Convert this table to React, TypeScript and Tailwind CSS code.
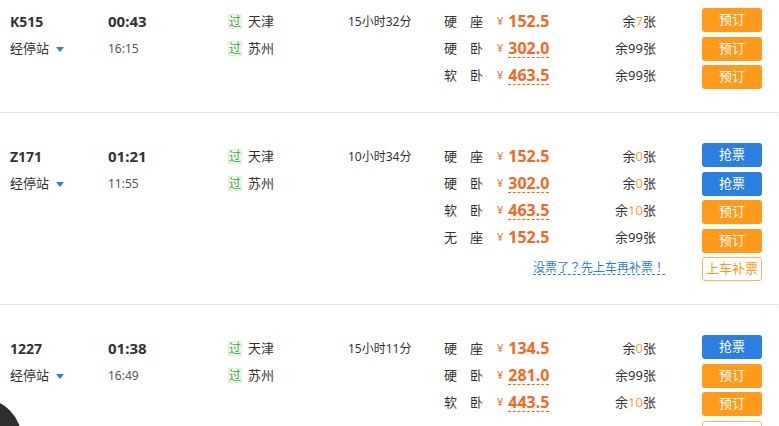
import React from 'react';

type Seat = {
  type: [string, string];
  price: string;
  left: string;
  hot?: boolean;
  dashed?: boolean;
  btn: '预订' | '抢票';
};

type Train = {
  no: string;
  dep: string;
  arr: string;
  from: string;
  to: string;
  dur: string;
  seats: Seat[];
  extra?: boolean;
};

const trains: Train[] = [
  {
    no: 'K515',
    dep: '00:43',
    arr: '16:15',
    from: '天津',
    to: '苏州',
    dur: '15小时32分',
    seats: [
      { type: ['硬', '座'], price: '152.5', left: '7', hot: true, btn: '预订' },
      { type: ['硬', '卧'], price: '302.0', left: '99', dashed: true, btn: '预订' },
      { type: ['软', '卧'], price: '463.5', left: '99', dashed: true, btn: '预订' },
    ],
  },
  {
    no: 'Z171',
    dep: '01:21',
    arr: '11:55',
    from: '天津',
    to: '苏州',
    dur: '10小时34分',
    seats: [
      { type: ['硬', '座'], price: '152.5', left: '0', hot: true, btn: '抢票' },
      { type: ['硬', '卧'], price: '302.0', left: '0', hot: true, dashed: true, btn: '抢票' },
      { type: ['软', '卧'], price: '463.5', left: '10', hot: true, dashed: true, btn: '预订' },
      { type: ['无', '座'], price: '152.5', left: '99', btn: '预订' },
    ],
    extra: true,
  },
  {
    no: '1227',
    dep: '01:38',
    arr: '16:49',
    from: '天津',
    to: '苏州',
    dur: '15小时11分',
    seats: [
      { type: ['硬', '座'], price: '134.5', left: '0', hot: true, btn: '抢票' },
      { type: ['硬', '卧'], price: '281.0', left: '99', dashed: true, btn: '预订' },
      { type: ['软', '卧'], price: '443.5', left: '10', hot: true, dashed: true, btn: '预订' },
    ],
    extra: true,
  },
];

const PassBadge = () => (
  <span className="inline-flex items-center justify-center w-[14px] h-[15px] bg-[#f3f9ec] border border-[#e0eed6] text-[#3aa34a] text-[12px] leading-none mr-[6px]">
    过
  </span>
);

const TrainRow = ({ t }: { t: Train }) => (
  <div className="flex pt-[30px] pb-[23px] border-b border-[#e3e3e3] text-[#333]">
    {/* train number */}
    <div className="w-[98px] ml-[10px]">
      <div className="h-[27px] flex items-center text-[14px] font-bold">{t.no}</div>
      <div className="h-[27px] flex items-center text-[13px]">
        经停站
        <span className="ml-[7px] mt-[2px] w-0 h-0 border-l-[4px] border-r-[4px] border-t-[5px] border-l-transparent border-r-transparent border-t-[#2f7fd6]"></span>
      </div>
    </div>

    {/* times */}
    <div className="w-[120px]">
      <div className="h-[27px] flex items-center text-[15px] font-bold">{t.dep}</div>
      <div className="h-[27px] flex items-center text-[12px] text-[#555]">{t.arr}</div>
    </div>

    {/* stations */}
    <div className="w-[120px]">
      <div className="h-[27px] flex items-center text-[13px]">
        <PassBadge />
        {t.from}
      </div>
      <div className="h-[27px] flex items-center text-[13px]">
        <PassBadge />
        {t.to}
      </div>
    </div>

    {/* duration */}
    <div className="w-[96px]">
      <div className="h-[27px] flex items-center text-[12px]">{t.dur}</div>
    </div>

    {/* seats */}
    <div className="w-[212px]">
      {t.seats.map((s, i) => (
        <div key={i} className="h-[27px] flex items-center justify-between text-[13px]">
          <div className="flex items-center">
            <span className="w-[39px] flex justify-between">
              <span>{s.type[0]}</span>
              <span>{s.type[1]}</span>
            </span>
            <span className="ml-[14px] text-[11px] text-[#f5681e]">¥</span>
            <span
              className={`ml-[5px] text-[16px] font-bold text-[#f5681e] leading-[18px] ${
                s.dashed ? 'border-b border-dashed border-[#f5681e]' : 'border-b border-transparent'
              }`}
            >
              {s.price}
            </span>
          </div>
          <span>
            余<span className={s.hot ? 'text-[#ff9d3a]' : ''}>{s.left}</span>张
          </span>
        </div>
      ))}
      {t.extra && (
        <div className="h-[27px] flex items-center justify-end -mr-[9px] mt-[2px]">
          <span
            className="text-[12px] text-[#2f7fd6] border-b border-dashed border-[#2f7fd6] leading-[15px]"
            style={{ fontFamily: '"Noto Sans CJK TC", "Noto Sans CJK SC", sans-serif' }}
          >
            没票了？先上车再补票！
          </span>
        </div>
      )}
    </div>

    {/* buttons */}
    <div className="ml-[46px] w-[60px] flex flex-col gap-[4.5px]">
      {t.seats.map((s, i) => (
        <button
          key={i}
          className={`h-[24px] w-full rounded-[3px] text-white text-[13px] flex items-center justify-center ${
            s.btn === '抢票' ? 'bg-[#2b7fe0]' : 'bg-[#ff9a1a]'
          }`}
        >
          {s.btn}
        </button>
      ))}
      {t.extra && (
        <button className="h-[24px] w-full rounded-[3px] border border-[#ffb266] bg-white text-[#ff9a1a] text-[13px] flex items-center justify-center">
          上车补票
        </button>
      )}
    </div>
  </div>
);

export default function App() {
  return (
    <div
      className="relative w-[779px] h-[426px] overflow-hidden bg-white"
      style={{ fontFamily: '"Noto Sans", "Noto Sans CJK SC", sans-serif' }}
    >
      <div className="-mt-[22px] w-[778px]">
        {trains.map((t) => (
          <TrainRow key={t.no} t={t} />
        ))}
      </div>
      {/* floating dark button peeking in at bottom-left */}
      <div className="absolute left-[-62px] top-[398px] w-[84px] h-[84px] rounded-full bg-[#2f2f2f]"></div>
    </div>
  );
}
